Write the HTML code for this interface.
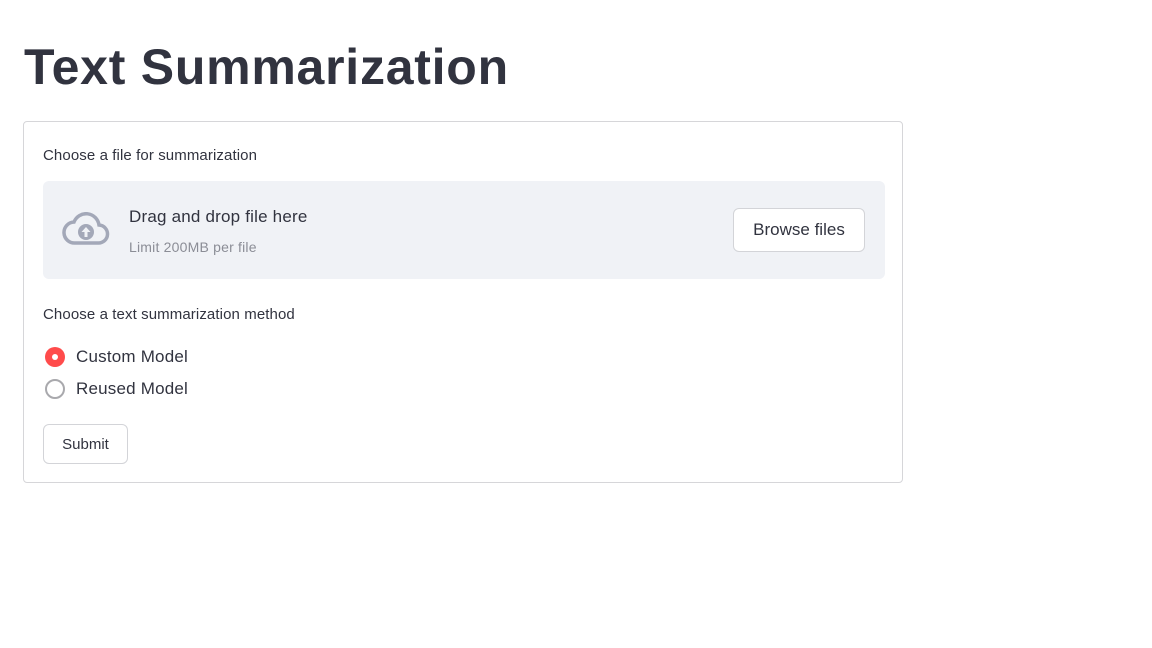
<!DOCTYPE html>
<html><head><meta charset="utf-8"><style>
body{margin:0;width:1152px;height:648px;background:#fff;font-family:"Liberation Sans",sans-serif;color:#31333f;position:relative;overflow:hidden}
.a{position:absolute;white-space:nowrap}
h1{position:absolute;left:24px;top:36px;margin:0;font-size:50px;font-weight:bold;letter-spacing:0.75px;line-height:62px}
.box{position:absolute;left:23px;top:121px;width:878px;height:360px;border:1px solid #d6d6d9;border-radius:4px}
.drop{position:absolute;left:43px;top:181px;width:842px;height:98px;background:#f0f2f6;border-radius:6px}
.btn{position:absolute;background:#fff;border:1px solid #d3d4d8;border-radius:6px;box-sizing:border-box;display:flex;align-items:center;justify-content:center}
.r{position:absolute;width:20px;height:20px;border-radius:50%;box-sizing:border-box}
</style></head><body>
<h1>Text Summarization</h1>
<div class="box"></div>
<div class="a" style="left:43px;top:147px;font-size:15px;letter-spacing:0.1px">Choose a file for summarization</div>
<div class="drop"></div>
<svg class="a" style="left:62px;top:212px" width="48" height="36" viewBox="0 0 48 36"><path d="M13 31 H36 A9 9 0 0 0 37 13 A13 13 0 0 0 12 10 A10.5 10.5 0 0 0 13 31 Z" fill="none" stroke="#a3a8b8" stroke-width="3.5"/><circle cx="24" cy="20" r="8" fill="#a3a8b8"/><path d="M24 15 L19.5 20 H22.5 V25 H25.5 V20 H28.5 Z" fill="#f0f2f6"/></svg>
<div class="a" style="left:129px;top:207px;font-size:17px;letter-spacing:0.2px">Drag and drop file here</div>
<div class="a" style="left:129px;top:239px;font-size:14px;color:#8b8d96;letter-spacing:0.2px">Limit 200MB per file</div>
<div class="btn" style="left:733px;top:208px;width:132px;height:44px;font-size:17px">Browse files</div>
<div class="a" style="left:43px;top:306px;font-size:15px;letter-spacing:0.1px">Choose a text summarization method</div>
<div class="r" style="left:45px;top:347px;background:#ff4b4b"><div style="position:absolute;left:7px;top:7px;width:6px;height:6px;border-radius:50%;background:#fff"></div></div>
<div class="a" style="left:76px;top:347px;font-size:17px;letter-spacing:0.2px">Custom Model</div>
<div class="r" style="left:45px;top:379px;border:2px solid #a9a9ad"></div>
<div class="a" style="left:76px;top:379px;font-size:17px;letter-spacing:0.2px">Reused Model</div>
<div class="btn" style="left:43px;top:424px;width:85px;height:40px;font-size:15px">Submit</div>
</body></html>
